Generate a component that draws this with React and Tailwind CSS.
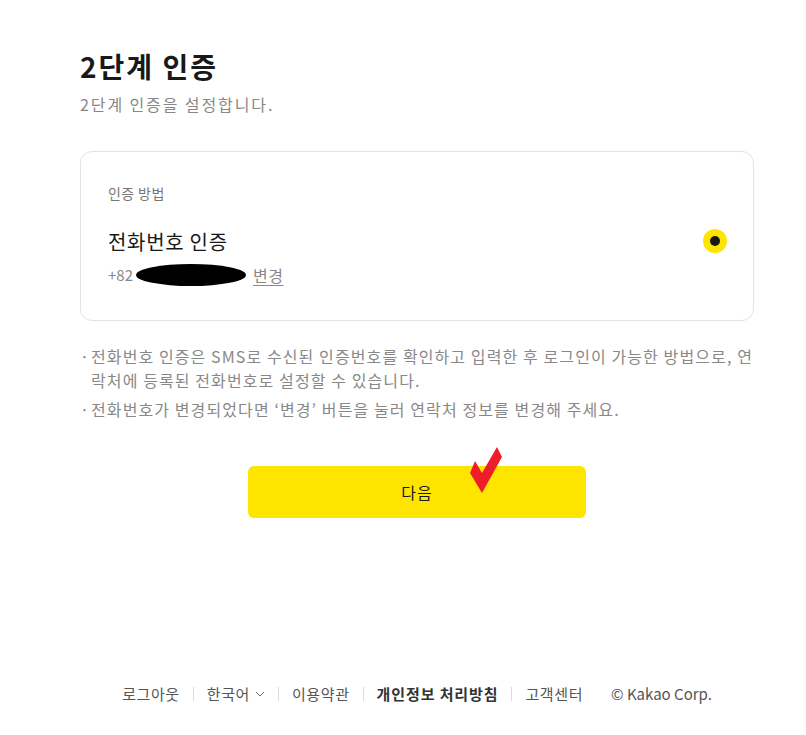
import React from 'react'

const FONT = { fontFamily: '"Noto Sans CJK KR", "Noto Sans", "Liberation Sans", sans-serif' }

const NOTES = [
  '전화번호 인증은 SMS로 수신된 인증번호를 확인하고 입력한 후 로그인이 가능한 방법으로, 연락처에 등록된 전화번호로 설정할 수 있습니다.',
  '전화번호가 변경되었다면 ‘변경’ 버튼을 눌러 연락처 정보를 변경해 주세요.',
]

function Sep() {
  return <span className="mx-[13px] inline-block h-[14px] w-px bg-[#dcdcdc]" />
}

export default function App() {
  return (
    <div className="min-h-[735px] w-[806px] bg-white text-[#191919]" style={FONT}>
      <div className="ml-[80px] flex w-[674px] flex-col">
        {/* heading */}
        <h1 className="mt-[44px] text-[28px] font-bold leading-[44px] tracking-[2px]">2단계 인증</h1>
        <p className="mt-[5px] text-[16px] leading-[22px] tracking-[1.9px] text-[#888]">2단계 인증을 설정합니다.</p>

        {/* method card */}
        <div className="mt-[36px] h-[170px] rounded-[12px] border border-[#e3e3e3] px-[27px]">
          <div className="mt-[31px] text-[14px] leading-[20px] tracking-[0.4px] text-[#777]">인증 방법</div>
          <div className="mt-[26px] flex items-center justify-between">
            <div>
              <div className="text-[20px] leading-[26px] tracking-[0.7px]">전화번호 인증</div>
              <div className="mt-[9px] flex items-center text-[15px] leading-[20px] text-[#888]">
                <span>+82</span>
                <span className="ml-[3px] inline-block h-[22px] w-[110px] rounded-[50%] bg-black" />
                <span className="ml-[7px] text-[16px] tracking-[0.5px] underline underline-offset-[3px]">변경</span>
              </div>
            </div>
            <div className="-mt-[34px] mr-[-1px] flex h-[24px] w-[24px] items-center justify-center rounded-full bg-[#fee500]">
              <span className="h-[10px] w-[10px] rounded-full bg-[#191919]" />
            </div>
          </div>
        </div>

        {/* notes */}
        <ul className="mt-[23px] flex flex-col gap-[5px] text-[16px] leading-[24px] tracking-[1.1px] text-[#888]">
          {NOTES.map((n, i) => (
            <li key={i} className="flex">
              <span className="w-[11px] shrink-0 tracking-normal">·</span>
              <span className="break-all">{n}</span>
            </li>
          ))}
        </ul>

        {/* next button */}
        <div className="relative mt-[45px] flex justify-center">
          <button className="h-[52px] w-[338px] rounded-[6px] bg-[#fee500] text-[16px] tracking-[1px] text-[#191919]">다음</button>
          <svg className="absolute left-[386px] top-[-20px]" width="40" height="50" viewBox="0 0 40 50">
            <polygon points="9,15 16,27 31,1 36,11 16,47 4,27" fill="#ee1d2a" />
          </svg>
        </div>

        {/* footer */}
        <div className="mt-[166px] flex items-center justify-center text-[15px] leading-[20px] tracking-[0.6px] text-[#555]">
          <span>로그아웃</span>
          <Sep />
          <span className="flex items-center">
            한국어
            <svg className="ml-[5px]" width="10" height="6" viewBox="0 0 10 6">
              <path d="M1 1l4 4 4-4" fill="none" stroke="#777" strokeWidth="1" />
            </svg>
          </span>
          <Sep />
          <span>이용약관</span>
          <Sep />
          <span className="font-bold tracking-[0.9px] text-[#333]">개인정보 처리방침</span>
          <Sep />
          <span>고객센터</span>
          <span className="ml-[28px] tracking-normal">© Kakao Corp.</span>
        </div>
      </div>
    </div>
  )
}
